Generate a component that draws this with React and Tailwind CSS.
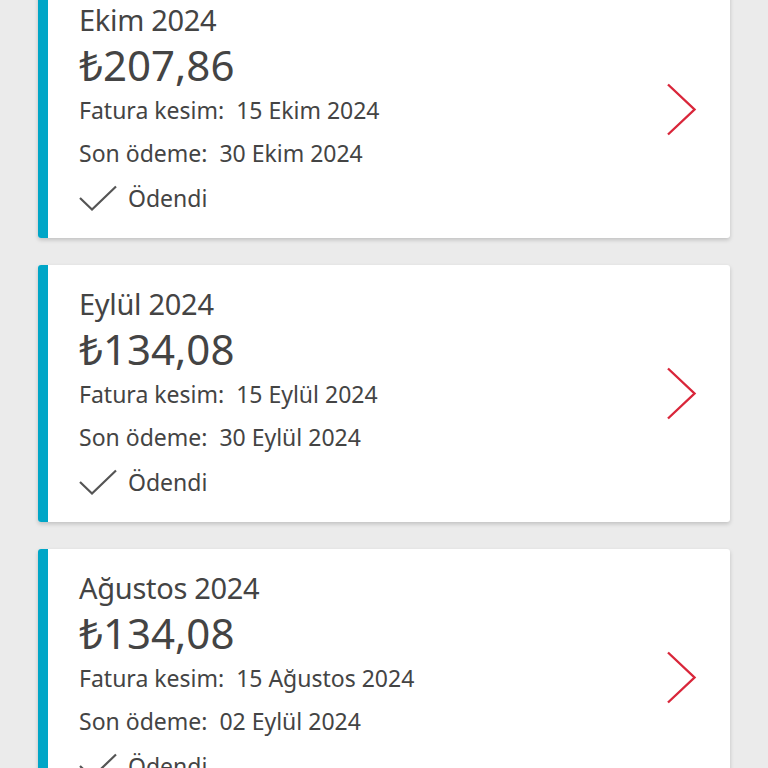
import React from "react";

const bills = [
  { month: "Ekim 2024", amount: "₺207,86", issued: "15 Ekim 2024", due: "30 Ekim 2024" },
  { month: "Eylül 2024", amount: "₺134,08", issued: "15 Eylül 2024", due: "30 Eylül 2024" },
  { month: "Ağustos 2024", amount: "₺134,08", issued: "15 Ağustos 2024", due: "02 Eylül 2024" },
];

function Check() {
  return (
    <svg width="40" height="26" viewBox="0 0 40 26" fill="none">
      <path d="M1 13 L13 24.5 L37 1.5" stroke="#555" strokeWidth="2.2" />
    </svg>
  );
}

function Chevron() {
  return (
    <svg width="32" height="54" viewBox="0 0 32 54" fill="none">
      <path d="M2 1.5 L28.5 26.5 L2 51.5" stroke="#d9263a" strokeWidth="2.4" />
    </svg>
  );
}

function BillCard({ bill }) {
  return (
    <div className="flex h-[257px] w-[692px] rounded-[3px] bg-white shadow-[0_2px_4px_rgba(0,0,0,0.18)]">
      <div className="w-[10px] shrink-0 rounded-l-[3px] bg-[#00a6c7]" />
      <div className="flex flex-1 items-start pl-[31px] pr-[32px]">
        <div className="flex flex-1 flex-col pt-[21px] text-[#444]">
          <div className="text-[29px] leading-[36px] tracking-[-0.3px]">{bill.month}</div>
          <div className="mt-[2px] text-[42px] leading-[50px]">{bill.amount}</div>
          <div className="mt-[5px] text-[23px] leading-[30px]">
            Fatura kesim:&nbsp; {bill.issued}
          </div>
          <div className="mt-[13px] text-[23px] leading-[30px]">
            Son ödeme:&nbsp; {bill.due}
          </div>
          <div className="mt-[15px] flex items-center gap-[9px] text-[23px] leading-[30px]">
            <Check />
            <span>Ödendi</span>
          </div>
        </div>
        <div className="self-center">
          <Chevron />
        </div>
      </div>
    </div>
  );
}

export default function App() {
  return (
    <div
      className="h-[768px] w-[768px] overflow-hidden bg-[#ebebeb]"
      style={{ fontFamily: '"Noto Sans", "Open Sans", sans-serif' }}
    >
      <div className="-mt-[19px] flex flex-col gap-[27px] pl-[38px]">
        {bills.map((b) => (
          <BillCard key={b.month} bill={b} />
        ))}
      </div>
    </div>
  );
}
